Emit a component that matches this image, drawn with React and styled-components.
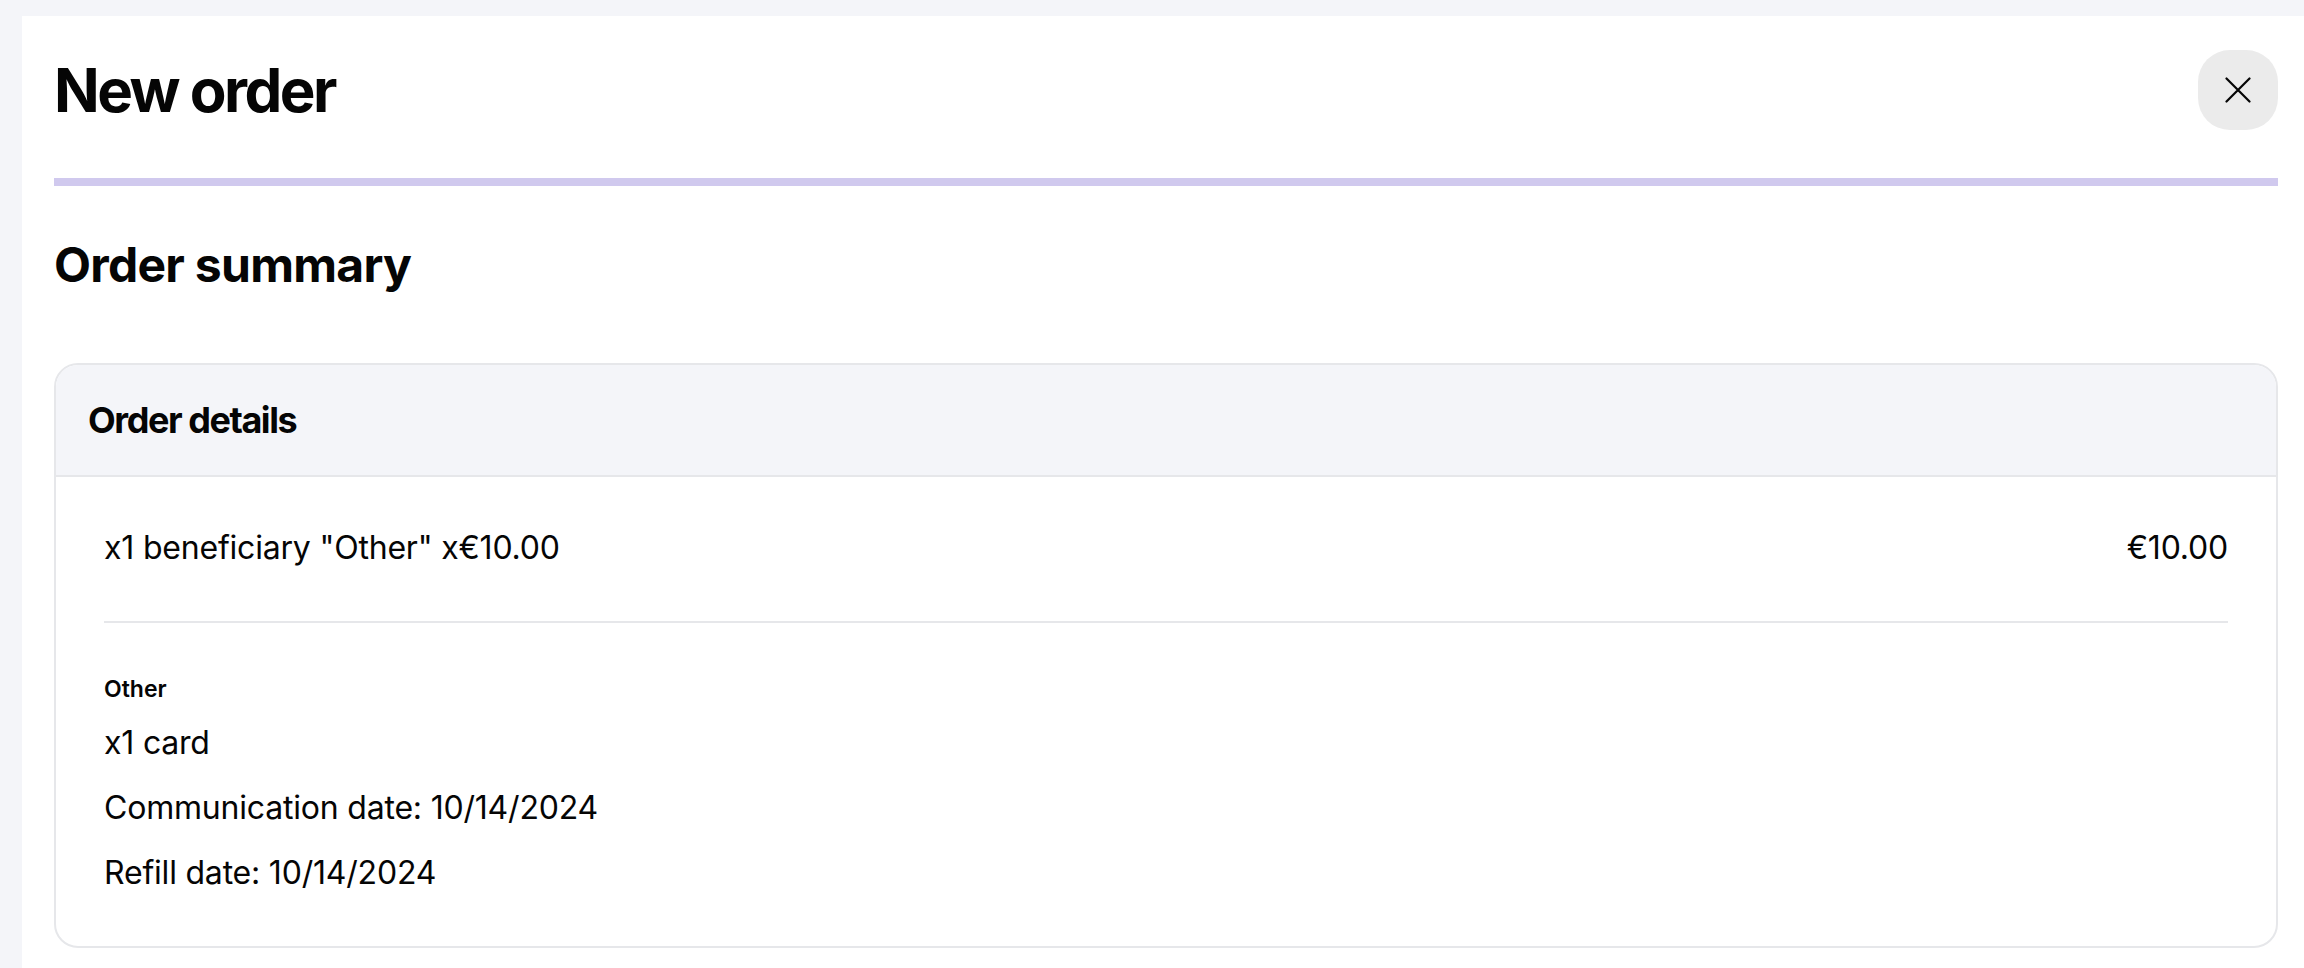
import React from "react";
import styled, { createGlobalStyle } from "styled-components";

const GlobalStyle = createGlobalStyle`
  html, body {
    margin: 0;
    padding: 0;
    background: #f4f5f9;
    font-family: Inter, "Noto Sans", Roboto, sans-serif;
    color: #050505;
  }
  * { box-sizing: border-box; }
`;

const Page = styled.div`
  min-height: 968px;
  padding: 16px 0 0 22px;
  background: #f4f5f9;
`;

const Panel = styled.main`
  background: #ffffff;
  min-height: 952px;
  padding: 34px 26px 40px 32px;
  display: flex;
  flex-direction: column;
`;

const Header = styled.header`
  display: flex;
  align-items: center;
  justify-content: space-between;
  height: 80px;
`;

const Title = styled.h1`
  margin: 0;
  font-size: 60px;
  line-height: 80px;
  font-weight: 700;
  letter-spacing: -0.042em;
`;

const CloseButton = styled.button`
  width: 80px;
  height: 80px;
  border: none;
  border-radius: 32px;
  background: #ebebeb;
  display: flex;
  align-items: center;
  justify-content: center;
  padding: 0;
  cursor: pointer;
`;

const Progress = styled.div`
  margin-top: 48px;
  height: 8px;
  background: #d0c9ee;
`;

const SectionTitle = styled.h2`
  margin: 50px 0 0;
  font-size: 48px;
  line-height: 1.2;
  font-weight: 700;
  letter-spacing: -0.015em;
`;

const Card = styled.section`
  margin-top: 69px;
  border: 2px solid #e6e7ea;
  border-radius: 24px;
  overflow: hidden;
`;

const CardHeader = styled.div`
  height: 112px;
  display: flex;
  align-items: center;
  padding: 0 32px;
  background: #f4f5f9;
  border-bottom: 2px solid #e6e7ea;
`;

const CardTitle = styled.h3`
  margin: 0;
  font-size: 36px;
  font-weight: 700;
  letter-spacing: -0.04em;
`;

const CardBody = styled.div`
  padding: 47px 48px 49px;
  font-size: 32px;
  letter-spacing: -0.2px;
`;

const LineRow = styled.div`
  display: flex;
  justify-content: space-between;
  align-items: center;
  line-height: 48px;
  padding-bottom: 49px;
  border-bottom: 2px solid #e6e7ea;
`;

const Details = styled.div`
  padding-top: 48px;
  display: flex;
  flex-direction: column;
`;

const DetailLabel = styled.div`
  font-size: 23px;
  line-height: 36px;
  font-weight: 600;
  letter-spacing: 0;
  margin-bottom: 12px;
`;

const DetailLine = styled.div`
  line-height: 48px;
  & + & {
    margin-top: 17px;
  }
`;

export default function App() {
  return (
    <>
      <GlobalStyle />
      <Page>
        <Panel>
          <Header>
            <Title>New order</Title>
            <CloseButton aria-label="Close">
              <svg width="26" height="26" viewBox="0 0 26 26" fill="none">
                <path
                  d="M1.5 1.5L24.5 24.5M24.5 1.5L1.5 24.5"
                  stroke="#050505"
                  strokeWidth="2.2"
                  strokeLinecap="round"
                />
              </svg>
            </CloseButton>
          </Header>
          <Progress />
          <SectionTitle>Order summary</SectionTitle>
          <Card>
            <CardHeader>
              <CardTitle>Order details</CardTitle>
            </CardHeader>
            <CardBody>
              <LineRow>
                <span>x1 beneficiary "Other" x€10.00</span>
                <span>€10.00</span>
              </LineRow>
              <Details>
                <DetailLabel>Other</DetailLabel>
                <DetailLine>x1 card</DetailLine>
                <DetailLine>Communication date: 10/14/2024</DetailLine>
                <DetailLine>Refill date: 10/14/2024</DetailLine>
              </Details>
            </CardBody>
          </Card>
        </Panel>
      </Page>
    </>
  );
}
